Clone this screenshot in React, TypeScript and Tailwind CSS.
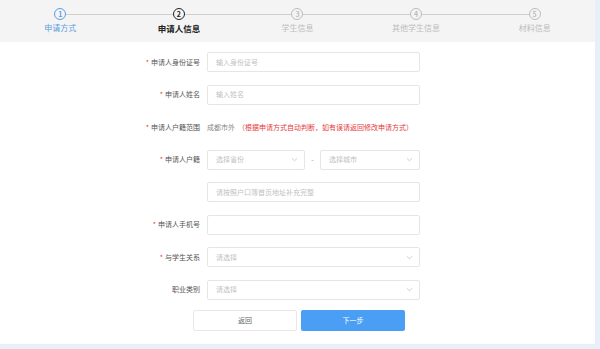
import React from "react";

const steps = [
  { n: 1, label: "申请方式", state: "done" },
  { n: 2, label: "申请人信息", state: "active" },
  { n: 3, label: "学生信息", state: "todo" },
  { n: 4, label: "其他学生信息", state: "todo" },
  { n: 5, label: "材料信息", state: "todo" },
];

function Chevron() {
  return (
    <svg width="7" height="5" viewBox="0 0 7 5" className="shrink-0">
      <path d="M0.8 1.2 L3.5 3.8 L6.2 1.2" fill="none" stroke="#c4c4c4" strokeWidth="0.8" />
    </svg>
  );
}

function Row({ label, required, children }: { label: string; required?: boolean; children: React.ReactNode }) {
  return (
    <div className="flex items-center h-[20px]">
      <div className="w-[80px] pr-[7px] text-right text-[7px] text-[#555]">
        {required && <span className="text-[#e4393c] mr-[2px]">*</span>}
        {label}
      </div>
      <div className="flex-1 flex items-center h-full">{children}</div>
    </div>
  );
}

function Input({ placeholder }: { placeholder?: string }) {
  return (
    <div className="w-full h-full border border-[#e6e6e6] rounded-[2px] bg-white flex items-center px-[8px] text-[7px] text-[#c2c2c2]">
      {placeholder}
    </div>
  );
}

function Select({ placeholder, className }: { placeholder: string; className?: string }) {
  return (
    <div
      className={
        "h-full border border-[#e6e6e6] rounded-[2px] bg-white flex items-center justify-between pl-[8px] pr-[6px] text-[7px] text-[#c2c2c2] " +
        (className ?? "w-full")
      }
    >
      <span>{placeholder}</span>
      <Chevron />
    </div>
  );
}

export default function App() {
  return (
    <div
      className="w-[600px] h-[349px] bg-[#e8eff9] overflow-hidden"
      style={{ fontFamily: '"Noto Sans CJK SC", "Noto Sans", sans-serif' }}
    >
      <div className="w-[595px] h-[344px] bg-white">
        {/* 步骤条 */}
        <div className="h-[42px] bg-[#f4f4f4] flex px-[1px] pt-[8px]">
          {steps.map((s, i) => {
            const color =
              s.state === "done" ? "#5b9de0" : s.state === "active" ? "#222" : "#bdbdbd";
            return (
              <div key={s.n} className="flex-1 flex flex-col items-center">
                <div className="w-full flex items-center h-[12px]">
                  <div className={"flex-1 h-px " + (i === 0 ? "" : "bg-[#cfcfcf]")} />
                  <div
                    className="w-[12px] h-[12px] rounded-full border flex items-center justify-center text-[7px] leading-none font-bold shrink-0"
                    style={{ borderColor: color, color }}
                  >
                    {s.n}
                  </div>
                  <div className={"flex-1 h-px " + (i === steps.length - 1 ? "" : "bg-[#cfcfcf]")} />
                </div>
                <div
                  className={
                    "mt-[2px] leading-[12px] " +
                    (s.state === "active" ? "text-[8.5px] font-bold" : "text-[8px]")
                  }
                  style={{ color }}
                >
                  {s.label}
                </div>
              </div>
            );
          })}
        </div>

        {/* 表单 */}
        <div className="pl-[127px] w-[420px] pt-[10px] flex flex-col gap-[12.5px]">
          <Row label="申请人身份证号" required>
            <Input placeholder="输入身份证号" />
          </Row>
          <Row label="申请人姓名" required>
            <Input placeholder="输入姓名" />
          </Row>
          <Row label="申请人户籍范围" required>
            <span className="text-[7px] text-[#888]">成都市外</span>
            <span className="text-[7px] text-[#e4393c] ml-[3px]">
              （根据申请方式自动判断，如有误请返回修改申请方式）
            </span>
          </Row>
          <Row label="申请人户籍" required>
            <Select placeholder="选择省份" className="w-[98px]" />
            <span className="w-[15px] text-center text-[7px] text-[#999]">-</span>
            <Select placeholder="选择城市" className="flex-1" />
          </Row>
          <Row label="">
            <Input placeholder="请按照户口簿首页地址补充完整" />
          </Row>
          <Row label="申请人手机号" required>
            <Input />
          </Row>
          <Row label="与学生关系" required>
            <Select placeholder="请选择" />
          </Row>
          <Row label="职业类别">
            <Select placeholder="请选择" />
          </Row>
        </div>

        {/* 按钮 */}
        <div className="flex justify-center gap-[4px] mt-[10px] ml-[3px]">
          <button className="w-[104px] h-[21px] border border-[#e8e8e8] rounded-[2px] bg-white text-[7px] text-[#666]">
            返回
          </button>
          <button className="w-[104px] h-[21px] rounded-[2px] bg-[#4a9ff5] text-[7px] text-white">
            下一步
          </button>
        </div>
      </div>
    </div>
  );
}
